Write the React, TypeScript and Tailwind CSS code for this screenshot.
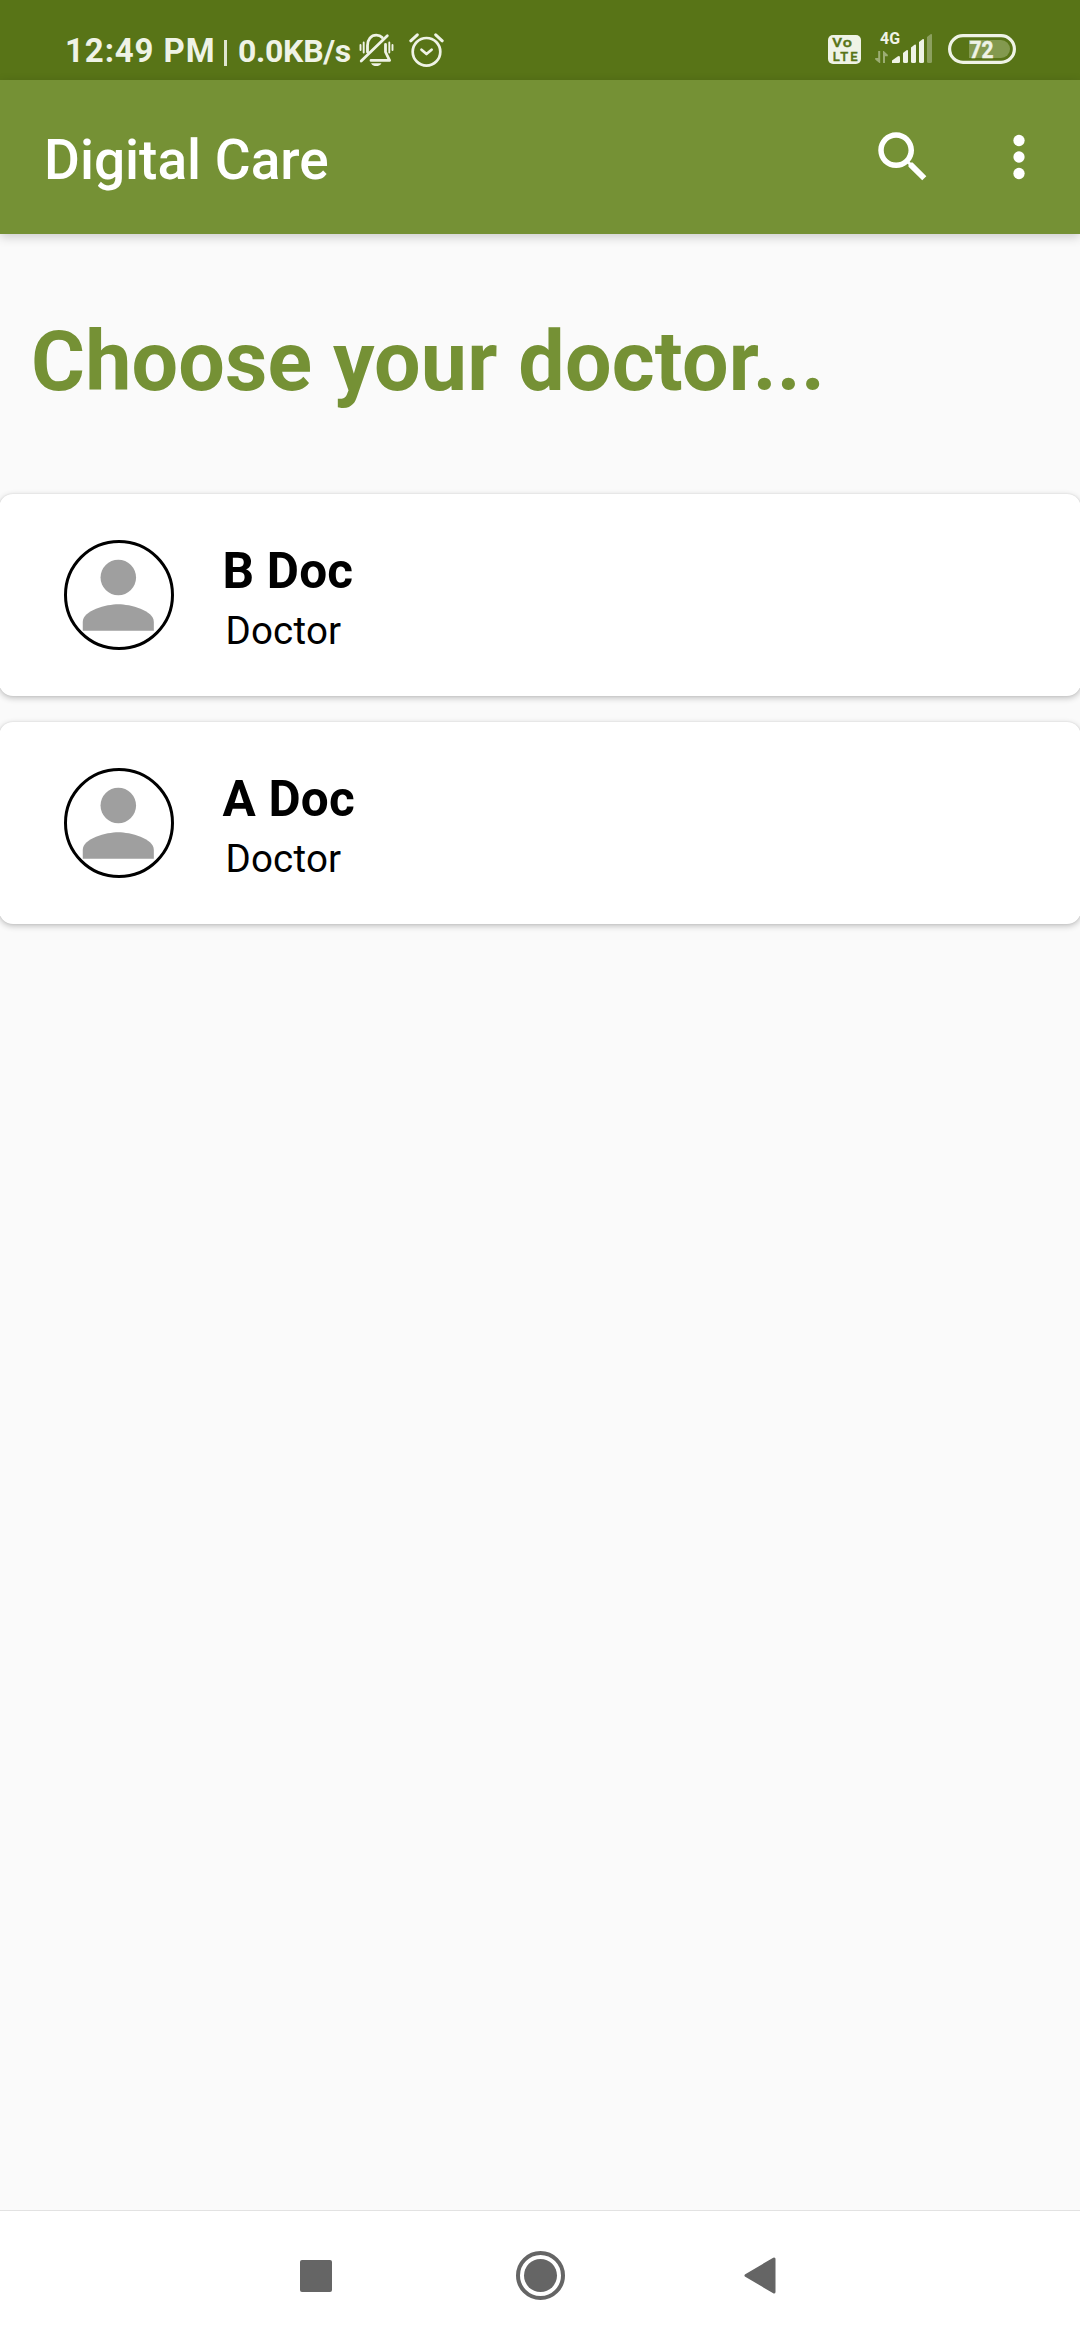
import React from "react";

function BellOffIcon() {
  return (
    <svg width="35" height="34" viewBox="0 0 35 34" fill="none" stroke="#eff3e6" strokeWidth="2.8" strokeLinecap="round" strokeLinejoin="round" className="shrink-0">
      <path d="M8.500 19V12.500C8.500 6.500 12 2.200 17.300 2.200C20 2.200 21.800 3 23.200 4.500" />
      <path d="M26.500 11.500V19L30.600 27.400H12" />
      <path d="M2.200 28L28.300 2.700" />
      <path d="M1.500 12V17M4.700 9.500V19.500M30.300 9.500V19.500M33.500 12V17" strokeWidth="1.9" />
      <path d="M12 30.200H22.500C21 32.500 19.400 33 17.300 33C15 33 13.400 32.500 12 30.200Z" fill="#eff3e6" stroke="none" />
    </svg>
  );
}

function AlarmIcon() {
  return (
    <svg width="35" height="35" viewBox="0 0 35 35" fill="none" stroke="#eff3e6" strokeWidth="2.7" strokeLinecap="round" strokeLinejoin="round" className="shrink-0">
      <circle cx="17.500" cy="19.800" r="13.800" />
      <path d="M12.500 17.700L17.500 22L22.600 17.700" />
      <path d="M1.800 8.800L8.300 2.800M26.700 2.800L33.200 8.800" strokeWidth="3" />
    </svg>
  );
}

function VolteIcon() {
  return (
    <div className="h-[29px] w-[33px] shrink-0 rounded-[5px] bg-[#eff3e6]">
      <svg width="33" height="29" viewBox="0 0 33 29" fill="#587417" stroke="#587417" strokeWidth="0.4" fontFamily="Roboto, sans-serif" fontWeight="500" className="overflow-visible">
        <text x="4.200" y="12.300" fontSize="12.700" textLength="9.800" lengthAdjust="spacingAndGlyphs">V</text>
        <text x="14.700" y="12.300" fontSize="13.500" textLength="9.200" lengthAdjust="spacingAndGlyphs">o</text>
        <text x="4.700" y="25.600" fontSize="13" textLength="25" lengthAdjust="spacing">LTE</text>
      </svg>
    </div>
  );
}

function SignalIcon() {
  return (
    <svg width="58" height="34" viewBox="0 0 58 34" fill="#eff3e6" className="shrink-0 overflow-visible">
      <text x="5" y="12" fontSize="16" fontWeight="700" fontFamily="Roboto, sans-serif" textLength="20" lengthAdjust="spacingAndGlyphs">4G</text>
      <g opacity="0.450">
        <path d="M3.200 19H5.200V31H4.400L0.200 27.400V26H3.200Z" />
        <path d="M8 31V19H8.800L12.800 22.800V24.300H10V31Z" />
      </g>
      <path d="M17 31V28.500L23 24.200Q25 23.200 25 25.500V29.500Q25 31 23.500 31Z" />
      <path d="M28 21L31.500 18.200Q33 17.500 33 19V29.500Q33 31 31.500 31H29.500Q28 31 28 29.500Z" />
      <path d="M36 15.500L39.500 12.700Q41 12 41 13.500V29.500Q41 31 39.500 31H37.500Q36 31 36 29.500Z" />
      <path d="M44 10L47.500 7.200Q49 6.500 49 8V29.500Q49 31 47.500 31H45.500Q44 31 44 29.500Z" />
      <path d="M52 5L55.500 2.200Q57 1.500 57 3V29.500Q57 31 55.500 31H53.500Q52 31 52 29.500Z" opacity="0.350" />
    </svg>
  );
}

function BatteryIcon() {
  return (
    <svg width="68" height="30" viewBox="0 0 68 30" className="shrink-0">
      <rect x="1.600" y="1.600" width="64.800" height="26.800" rx="13.400" fill="none" stroke="#eff3e6" strokeWidth="3.200" />
      <path d="M21 6H53A9 9 0 0 1 53 24H21Z" fill="#83994f" />
      <text x="21.500" y="23.700" fontSize="24.500" fontWeight="700" fontFamily="Roboto, sans-serif" fill="#eff3e6" stroke="#eff3e6" strokeWidth="0.500" textLength="24" lengthAdjust="spacingAndGlyphs">72</text>
    </svg>
  );
}

function StatusBar() {
  return (
    <header className="flex h-[80px] items-start bg-[#587417] pl-[65px] pr-16 text-[#eff3e6]">
      <span className="mt-[31px] w-[150px] whitespace-nowrap text-[33px] font-bold leading-[39px] tracking-[0.880px]">12:49 PM</span>
      <span className="ml-[9px] mt-[40px] h-[26px] w-[3px] bg-[#dfe6d0]" />
      <span className="ml-[11px] mt-[32px] w-[121px] whitespace-nowrap text-[32px] font-bold leading-[39px] tracking-[-0.300px]">0.0KB/s</span>
      <span className="mt-[33px]"><BellOffIcon /></span>
      <span className="ml-[15px] mt-[32px]"><AlarmIcon /></span>
      <div className="ml-auto flex items-start">
        <span className="mt-[35px]"><VolteIcon /></span>
        <span className="ml-[14px] mt-[32px]"><SignalIcon /></span>
        <span className="ml-[15px] mt-[34px]"><BatteryIcon /></span>
      </div>
    </header>
  );
}

function AppBar() {
  return (
    <div className="z-10 flex h-[154px] items-center bg-[#759135] pl-11 pr-[28px] text-white shadow-[0_3px_10px_rgba(0,0,0,0.190)]">
      <h1 className="mt-[6px] text-[55px] font-medium leading-[64px]">Digital Care</h1>
      <button className="mb-[1px] ml-auto" aria-label="Search">
        <svg width="66" height="66" viewBox="0 0 24 24" fill="currentColor">
          <path d="M15.500 14h-.79l-.28-.27C15.410 12.590 16 11.110 16 9.500 16 5.910 13.090 3 9.500 3S3 5.910 3 9.500 5.910 16 9.500 16c1.610 0 3.090-.59 4.230-1.570l.27.28v.79l5 4.990L20.490 19l-4.990-5zm-6 0C7.010 14 5 11.990 5 9.500S7.010 5 9.500 5 14 7.010 14 9.500 11.990 14 9.500 14z" />
        </svg>
      </button>
      <button className="mb-[1px] ml-[50px]" aria-label="More options">
        <svg width="66" height="66" viewBox="0 0 24 24" fill="currentColor">
          <circle cx="12" cy="6" r="2.050" />
          <circle cx="12" cy="12" r="2.050" />
          <circle cx="12" cy="18" r="2.050" />
        </svg>
      </button>
    </div>
  );
}

function DoctorCard({ name }: { name: string }) {
  return (
    <li className="-mx-px flex h-[202px] items-start rounded-[14px] bg-white pl-[64.500px] shadow-[0_2px_6px_rgba(0,0,0,0.240),0_0_2px_rgba(0,0,0,0.100)]">
      <div className="mt-[46px] flex h-[110px] w-[110px] items-center justify-center rounded-full border-[3px] border-black">
        <svg width="106.600" height="106.600" viewBox="0 0 24 24" fill="#9f9f9f" className="shrink-0">
          <circle cx="12" cy="8" r="4" />
          <path d="M12 14c-2.670 0-8 1.340-8 4v2h16v-2c0-2.660-5.330-4-8-4z" />
        </svg>
      </div>
      <div className="ml-[49px] mt-[48px] text-black">
        <p className="text-[49.500px] font-bold leading-[58px] tracking-[0.200px]">{name}</p>
        <p className="ml-[3px] mt-[8px] text-[38.500px] leading-[46px] tracking-[0.200px]">Doctor</p>
      </div>
    </li>
  );
}

function NavBar() {
  return (
    <nav className="mt-auto flex h-[130px] items-center justify-between border-t border-[#e2e2e2] bg-white pl-[300px] pr-[304px]">
      <button aria-label="Recent apps" className="h-8 w-8 rounded-[2px] bg-[#656565]" />
      <button aria-label="Home" className="ml-[4px] flex h-[49px] w-[49px] items-center justify-center rounded-full border-4 border-[#656565]">
        <span className="h-[33px] w-[33px] rounded-full bg-[#656565]" />
      </button>
      <button aria-label="Back">
        <svg width="32" height="37" viewBox="0 0 32 37" fill="#656565" stroke="#656565" strokeWidth="3" strokeLinejoin="round">
          <path d="M2 18.500L30 2V35Z" />
        </svg>
      </button>
    </nav>
  );
}

export default function App() {
  return (
    <div className="flex h-[2340px] w-[1080px] flex-col overflow-hidden bg-[#fafafa] font-['Roboto',sans-serif]">
      <StatusBar />
      <AppBar />
      <main>
        <h2 className="ml-[31px] mt-[79px] text-[82.500px] font-bold leading-[97px] tracking-[0.180px] text-[#759135]">Choose your doctor...</h2>
        <ul className="mt-[84px] flex flex-col gap-[26px]">
          <DoctorCard name="B Doc" />
          <DoctorCard name="A Doc" />
        </ul>
      </main>
      <NavBar />
    </div>
  );
}
